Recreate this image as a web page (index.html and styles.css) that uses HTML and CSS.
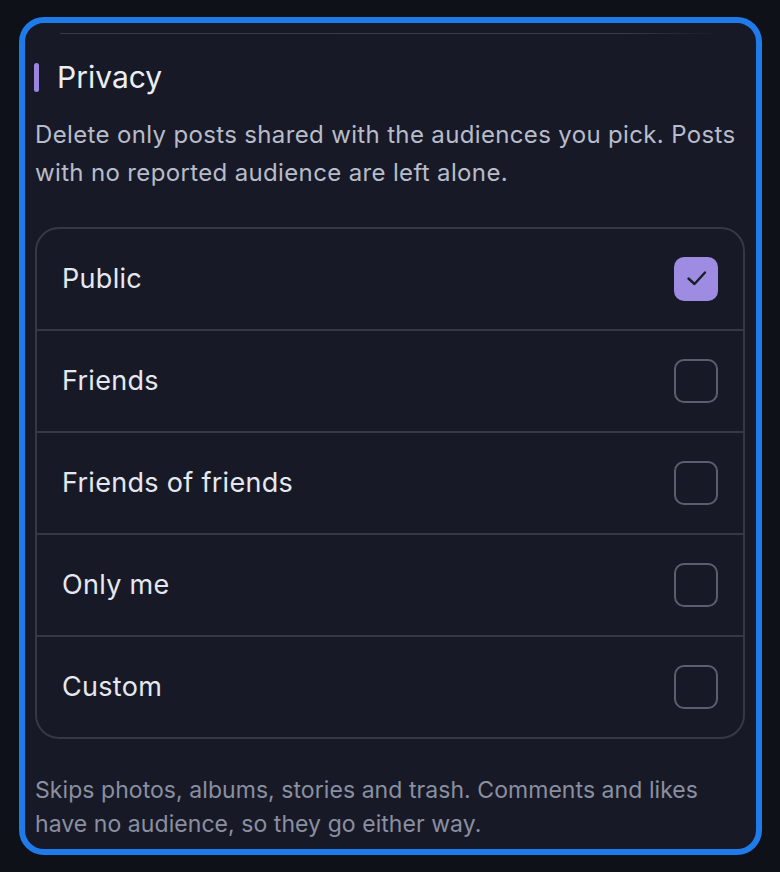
FILE: index.html
```html
<!DOCTYPE html>
<html lang="en">
<head>
<meta charset="utf-8">
<title>Privacy</title>
<link rel="stylesheet" href="styles.css">
</head>
<body>
<div class="panel">
  <div class="divider"></div>
  <section class="section">
    <h2 class="section-title"><span class="accent"></span>Privacy</h2>
    <p class="desc">Delete only posts shared with the audiences you pick. Posts with no reported audience are left alone.</p>
    <ul class="options">
      <li class="option"><span class="label">Public</span>
        <span class="check checked"><svg viewBox="0 0 44 44" width="44" height="44"><path d="M14.5 21.5 L20.5 27 L31 15.5" fill="none" stroke="#1b1d2b" stroke-width="2.4" stroke-linecap="round" stroke-linejoin="round"/></svg></span>
      </li>
      <li class="option"><span class="label">Friends</span><span class="check"></span></li>
      <li class="option"><span class="label">Friends of friends</span><span class="check"></span></li>
      <li class="option"><span class="label">Only me</span><span class="check"></span></li>
      <li class="option"><span class="label">Custom</span><span class="check"></span></li>
    </ul>
    <p class="note">Skips photos, albums, stories and trash. Comments and likes have no audience, so they go either way.</p>
  </section>
</div>
</body>
</html>
```

FILE: styles.css
```css
* { box-sizing: border-box; }
html, body { margin: 0; }
body {
  background: #0e1118;
  padding: 17px 18px 17px 19px;
  font-family: Inter, "Noto Sans", "Liberation Sans", sans-serif;
  height: 872px;
}
.panel {
  height: 838px;
  border: 6px solid #1f7be9;
  border-radius: 25px;
  background: #171a26;
  overflow: hidden;
  padding: 0 11px 0 10px;
}
.divider {
  height: 1px;
  margin: 10px 25px 0 25px;
  background: linear-gradient(to right, #363946 0%, #3a3d49 85%, rgba(58,61,73,0) 100%);
}
.section-title {
  margin: 25px 0 0 0;
  display: flex;
  align-items: center;
  gap: 18px;
  font-size: 30px;
  line-height: 36px;
  font-weight: 400;
  color: #eceef5;
}
.accent {
  width: 5px;
  height: 29px;
  border-radius: 3px;
  background: #9a86e0;
  margin-left: -1px;
}
.desc {
  margin: 21px 0 0 0;
  font-size: 24px;
  line-height: 38px;
  letter-spacing: 0.35px;
  color: #b8bcca;
}
.options {
  list-style: none;
  margin: 35px 0 0 0;
  padding: 0;
  border: 2px solid #353946;
  border-radius: 24px;
}
.option {
  display: flex;
  align-items: center;
  justify-content: space-between;
  height: 100px;
  padding: 0 25px;
}
.option + .option {
  border-top: 2px solid #353946;
  height: 102px;
}
.label {
  font-size: 27px;
  line-height: 32px;
  letter-spacing: 0.3px;
  color: #e6e8f0;
}
.check {
  width: 44px;
  height: 44px;
  border: 2px solid #5b5f6d;
  border-radius: 10px;
  display: block;
}
.check.checked {
  border: none;
  background: #9d8ce2;
}
.check svg { display: block; }
.note {
  margin: 35px 0 0 0;
  font-size: 23px;
  line-height: 33.5px;
  letter-spacing: 0.06px;
  color: #8a8fa1;
}
```
